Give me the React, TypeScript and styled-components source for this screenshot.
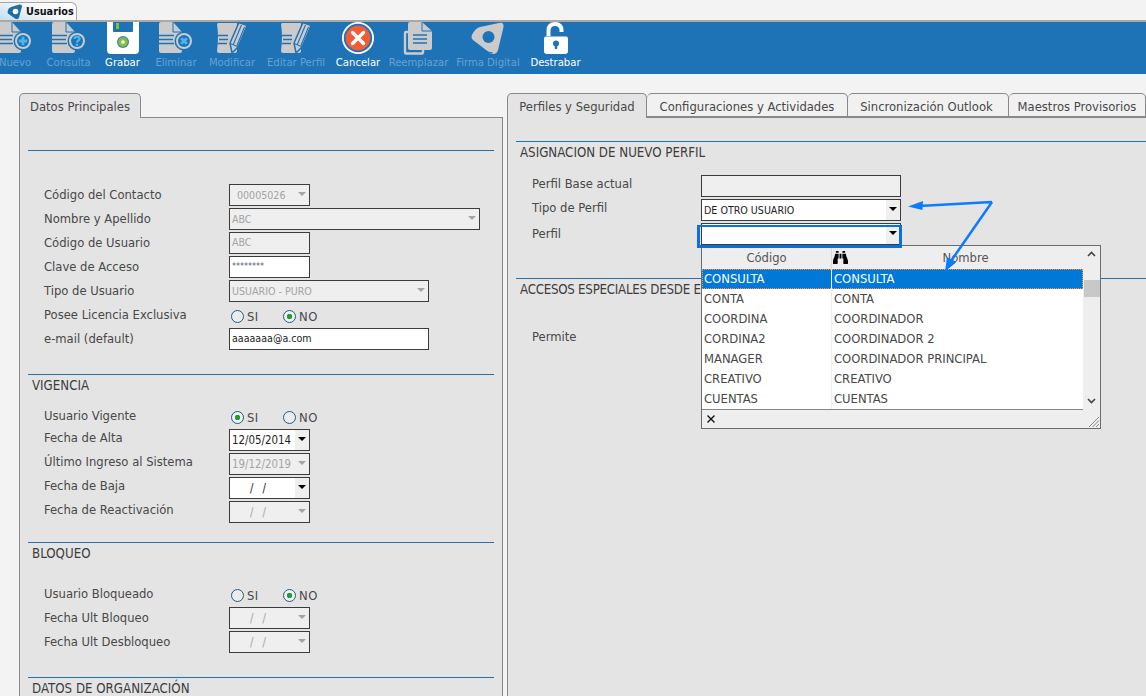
import React from "react";
import styled, { createGlobalStyle } from "styled-components";
import { FaBinoculars } from "react-icons/fa";

const Global = createGlobalStyle`
  html, body { margin: 0; padding: 0; height: 696px; overflow: hidden; background: #f3f3f3; }
  body { font-family: "DejaVu Sans Condensed", "DejaVu Sans", sans-serif; font-size: 12.9px; color: #484848; }
`;

const BLUE = "#1e73b7";
const GREY = "#cbcbcb";

const Root = styled.div`
  width: 1146px;
  height: 696px;
  overflow: hidden;
  display: flex;
  flex-direction: column;
`;
const TabStrip = styled.div`
  height: 20px;
  display: flex;
  align-items: flex-end;
  flex: none;
`;
const WindowTab = styled.div`
  width: 77px;
  height: 18px;
  box-sizing: border-box;
  border: 1px solid #a6a6a6;
  border-left: none;
  border-bottom: none;
  border-radius: 0 6px 0 0;
  background: linear-gradient(200deg, #ffffff 0%, #f4f8fb 45%, #c4ddf0 100%);
  display: flex;
  align-items: center;
  gap: 3px;
  padding-left: 7px;
  font-weight: 700;
  font-size: 10.8px;
  color: #111;
`;
const Toolbar = styled.div`
  flex: none;
  height: 54px;
  box-sizing: border-box;
  border-top: 2px solid #a9a9a9;
  background: ${BLUE};
  display: flex;
  align-items: flex-start;
`;
const ToolItem = styled.div<{ $w: number; $gap: number; $on?: boolean }>`
  width: ${(p) => p.$w}px;
  margin-left: ${(p) => p.$gap}px;
  flex: none;
  display: flex;
  flex-direction: column;
  align-items: center;
  white-space: nowrap;
  color: ${(p) => (p.$on ? "#ffffff" : "#67a1d1")};
  font-size: 11.2px;
  svg { flex: none; display: block; overflow: visible; }
`;
const ToolLabel = styled.span`
  margin-top: 2px;
  line-height: 14px;
`;
const Content = styled.div`
  flex: 1;
  min-height: 0;
  display: flex;
  gap: 4px;
  padding: 19px 0 0 19px;
`;
const Column = styled.div<{ $w?: number }>`
  ${(p) => (p.$w ? `width:${p.$w}px;flex:none;` : "flex:1;min-width:0;")}
  display: flex;
  flex-direction: column;
`;
const TabRow = styled.div`
  display: flex;
  height: 25px;
  flex: none;
  position: relative;
  z-index: 1;
`;
const PanelTab = styled.div<{ $w: number; $active?: boolean; $nudge?: number }>`
  width: ${(p) => p.$w}px;
  box-sizing: border-box;
  height: ${(p) => (p.$active ? 25 : 24)}px;
  border: 1px solid #888;
  border-bottom: ${(p) => (p.$active ? "none" : "1px solid #888")};
  border-left-width: ${(p) => (p.$active ? 1 : 0)}px;
  border-radius: 5px 5px 0 0;
  background: ${(p) => (p.$active ? "#e4e4e4" : "#f1f1f1")};
  display: flex;
  align-items: center;
  justify-content: center;
  white-space: nowrap;
  flex: none;
  padding-top: ${(p) => (p.$active ? 0 : 2)}px;
  padding-right: ${(p) => p.$nudge ?? 0}px;
`;
const Panel = styled.div<{ $open?: boolean }>`
  flex: 1;
  min-height: 0;
  margin-top: -1px;
  background: #e4e4e4;
  border: 1px solid #888;
  border-bottom: none;
  ${(p) => (p.$open ? "border-right: none;" : "")}
  padding: 0 ${(p) => (p.$open ? 0 : 8)}px 0 8px;
  position: relative;
  overflow: hidden;
`;
const Section = styled.div<{ $first: number; $after: number }>`
  margin-top: ${(p) => p.$first}px;
  margin-bottom: ${(p) => p.$after}px;
  border-top: 1px solid ${BLUE};
`;
const SectionHead = styled.div<{ $h: number; $clip?: boolean }>`
  height: ${(p) => p.$h}px;
  padding: 1px 0 0 4px;
  box-sizing: border-box;
  font-size: 13.2px;
  line-height: 20px;
  color: #3d3d3d;
  white-space: nowrap;
  ${(p) => (p.$clip ? "width: 185px; overflow: hidden; letter-spacing: -0.25px;" : "")}
`;
const Rows = styled.div<{ $label: number }>`
  display: grid;
  grid-template-columns: ${(p) => p.$label}px 1fr;
  row-gap: 2px;
  padding-left: 16px;
`;
const Label = styled.div<{ $up?: number }>`
  height: 22px;
  box-sizing: border-box;
  display: flex;
  align-items: center;
  padding-bottom: ${(p) => (p.$up ?? 1) * 2}px;
  white-space: nowrap;
`;
const Field = styled.div<{ $w: number; $off?: boolean; $indent?: number; $date?: boolean; $raise?: boolean }>`
  position: relative;
  width: ${(p) => p.$w}px;
  height: 22px;
  box-sizing: border-box;
  border: 1px solid #3c3c3c;
  background: ${(p) => (p.$off ? "#efefef" : "#ffffff")};
  color: ${(p) => (p.$off ? "#a4a4a4" : "#222")};
  display: flex;
  align-items: center;
  padding-left: ${(p) => p.$indent ?? 2}px;
  padding-bottom: ${(p) => (p.$raise ? 2 : 0)}px;
  font-size: ${(p) => (p.$date ? 11.4 : 10.6)}px;
  white-space: nowrap;
`;
const Stars = styled.span`
  font-size: 9px;
  letter-spacing: -0.05px;
  color: #56626e;
  padding-bottom: 3px;
`;
const DateGap = styled.span`
  display: inline-block;
  width: 9px;
`;
const Caret = styled.span<{ $off?: boolean }>`
  position: absolute;
  right: 0;
  top: 0;
  bottom: 0;
  width: 14px;
  background: ${(p) => (p.$off ? "transparent" : "#efefef")};
  &::after {
    content: "";
    position: absolute;
    left: 3px;
    top: 7px;
    border-left: 4px solid transparent;
    border-right: 4px solid transparent;
    border-top: 4px solid ${(p) => (p.$off ? "#a4a4a4" : "#000")};
  }
`;
const RadioGroup = styled.div`
  height: 22px;
  padding: 2px 0 0 2px;
  box-sizing: border-box;
  display: flex;
  align-items: center;
`;
const RadioDot = styled.span<{ $on?: boolean }>`
  width: 13px;
  height: 13px;
  box-sizing: border-box;
  border: 1px solid #1f5c8c;
  border-radius: 50%;
  background: ${(p) => (p.$on ? "radial-gradient(circle, #1f9e2f 0 2.5px, #f2f2f2 3px)" : "#ececec")};
  flex: none;
`;
const RadioText = styled.span<{ $w: number }>`
  width: ${(p) => p.$w}px;
  padding-left: 3px;
  box-sizing: border-box;
  letter-spacing: 0.5px;
`;
const FieldWrap = styled.div`
  position: relative;
`;
const Highlight = styled.div`
  position: absolute;
  left: -4px;
  top: 2px;
  width: 205px;
  height: 23px;
  box-sizing: border-box;
  border: 3px solid #0a6fe0;
  border-top-width: 2.5px;
  z-index: 3;
  pointer-events: none;
`;
const Popup = styled.div`
  position: absolute;
  left: 0;
  top: 22px;
  width: 400px;
  height: 184px;
  box-sizing: border-box;
  border: 1px solid #6c6c6c;
  background: #fff;
  z-index: 2;
  display: grid;
  grid-template-columns: 1fr 17px;
  grid-template-rows: 1fr 19px;
`;
const ListArea = styled.div`
  display: flex;
  flex-direction: column;
  min-width: 0;
`;
const HeadRow = styled.div`
  height: 23px;
  flex: none;
  display: grid;
  grid-template-columns: 129px 1fr;
  background: #eeeeee;
  color: #555;
`;
const HeadCell = styled.div`
  display: flex;
  align-items: center;
  justify-content: center;
  & + & { border-left: 1px solid #d8d8d8; justify-content: flex-start; padding-left: 1px; }
  svg { flex: none; color: #000; }
`;
const HeadName = styled.span`
  flex: 1;
  text-align: center;
`;
const ListRow = styled.div<{ $sel?: boolean }>`
  height: 20px;
  box-sizing: border-box;
  flex: none;
  display: grid;
  grid-template-columns: 129px 1fr;
  line-height: 20px;
  background: ${(p) => (p.$sel ? "#0078d7" : "#fff")};
  color: ${(p) => (p.$sel ? "#fff" : "#484848")};
  ${(p) => (p.$sel ? "outline: 1px dotted #ff9a2e; outline-offset: -1px;" : "")}
`;
const ListCell = styled.div<{ $sel?: boolean }>`
  height: 100%;
  padding-left: 2px;
  white-space: nowrap;
  & + & { border-left: 1px solid ${(p) => (p.$sel ? "#fff" : "#eee")}; padding-left: 2px; }
`;
const Scroll = styled.div`
  grid-row: 1 / 3;
  grid-column: 2;
  background: #eeeeee;
  position: relative;
`;
const ScrollThumb = styled.div`
  position: absolute;
  left: 1px;
  right: 0;
  top: 34px;
  height: 17px;
  background: #c8c8c8;
`;
const Chevron = styled.svg<{ $top: number }>`
  position: absolute;
  left: 4px;
  top: ${(p) => p.$top}px;
`;
const PopupFoot = styled.div`
  background: #eeeeee;
  border-top: 1px solid #888;
  position: relative;
  display: flex;
  align-items: center;
  padding-left: 4px;
`;
const Grip = styled.svg`
  position: absolute;
  right: 0;
  bottom: 0;
  z-index: 4;
`;
const Arrows = styled.svg`
  position: absolute;
  left: 0;
  top: 0;
  z-index: 5;
  pointer-events: none;
`;

const DocBody = () => (
  <path d="M1 0H13L22 10V29Q22 31 20 31H1Q-1 31-1 29V2Q-1 0 1 0Z" fill={GREY} />
);
const DocLines = () => (
  <path d="M-1 13.5H14M-1 17.5H13M-1 21.5H14" stroke={BLUE} strokeWidth="1.5" />
);
const GLYPH = "#4db5ee";
const Badge = ({ children }: { children: React.ReactNode }) => (
  <>
    <path d="M13 0V10H22" fill="none" stroke={BLUE} strokeWidth="1" />
    <circle cx="24" cy="19" r="9.5" fill={BLUE} />
    <circle cx="24" cy="19" r="8" fill={GREY} />
    <circle cx="24" cy="19" r="6" fill="#1a75b8" />
    {children}
  </>
);
const DocIcon = ({ kind }: { kind: "plus" | "q" | "x" }) => (
  <svg width="32" height="32" viewBox="0 0 32 32">
    <DocBody />
    <DocLines />
    <Badge>
      {kind === "plus" && <path d="M24 14.8V23.2M19.8 19H28.2" stroke={GLYPH} strokeWidth="2.8" />}
      {kind === "x" && <path d="M21.2 16.2L26.8 21.8M26.8 16.2L21.2 21.800" stroke={GLYPH} strokeWidth="2.8" />}
      {kind === "q" && (
        <>
          <path d="M21.5 17Q21.6 14.8 24 14.8Q26.500 14.800 26.500 16.800Q26.500 18 25 18.800Q24 19.400 24 20.600" fill="none" stroke={GLYPH} strokeWidth="2.200" />
          <circle cx="24" cy="22.8" r="1.3" fill={GLYPH} />
        </>
      )}
    </Badge>
  </svg>
);
const PencilIcon = () => (
  <svg width="32" height="32" viewBox="0 0 32 32">
    <path d="M3 1H21V29Q21 31 19 31H3Q1 31 1 29Q3 15 1 2Q1 1 3 1Z" fill={GREY} />
    <path d="M2 13.5H12M3 17.5H12M2 21.5H11" stroke={BLUE} strokeWidth="1.5" />
    <path d="M16 31L14 21L23 0.5L31 3.5L22 25Z" fill={GREY} stroke={BLUE} strokeWidth="1.5" />
    <path d="M17.5 22L25.5 3M21 23.5L28.5 5M14.5 21.5L22.5 25" fill="none" stroke={BLUE} strokeWidth="1.1" />
  </svg>
);
const SaveIcon = () => (
  <svg width="32" height="32" viewBox="0 0 32 32">
    <path d="M0 0H32V28Q32 32 28 32H4Q0 32 0 28Z" fill="#fff" />
    <path d="M6 0H26V9Q26 10 25 10H7Q6 10 6 9Z" fill={BLUE} />
    <rect x="9" y="1" width="3" height="6" fill="#86bf3c" />
    <circle cx="16" cy="20" r="6" fill="#2f86b8" />
    <circle cx="16" cy="20" r="4.8" fill="#86bf3c" />
    <circle cx="16" cy="20" r="1.8" fill="#fff" />
  </svg>
);
const CancelIcon = () => (
  <svg width="32" height="32" viewBox="0 0 32 32">
    <circle cx="16" cy="16" r="16" fill="#fff" />
    <circle cx="16" cy="16" r="14.2" fill={BLUE} />
    <circle cx="16" cy="16" r="12.4" fill="#f15d36" />
    <path d="M10.5 10.5L21.5 21.5M21.5 10.5L10.5 21.5" stroke="#fff" strokeWidth="3.4" strokeLinecap="round" />
  </svg>
);
const ReplaceIcon = () => (
  <svg width="32" height="32" viewBox="0 0 32 32">
    <path d="M5 10H3Q2 10 2 11V30Q2 31.500 3 31.500H19Q20 31.500 20 30V28" fill="none" stroke={GREY} strokeWidth="2.4" />
    <path d="M7 0H19L29 9V26Q29 28 27 28H7Q5 28 5 26V2Q5 0 7 0Z" fill={GREY} />
    <path d="M19 0V9H29" fill="none" stroke={BLUE} strokeWidth="1" />
    <path d="M10 13H24M10 17H24M10 21H24" stroke={BLUE} strokeWidth="1.6" />
  </svg>
);
const SignIcon = () => (
  <svg width="34" height="32" viewBox="0 0 34 32">
    <path d="M2 11Q-1 15 2 18L19 31Q25 34 27 28L32.500 5Q33 0 28 1L9 5Q5 6 2 11Z" fill={GREY} />
    <path d="M6 22Q12 30 22 31" fill="none" stroke={BLUE} strokeWidth="0.9" />
    <circle cx="17.5" cy="15" r="6" fill={BLUE} />
  </svg>
);
const LockIcon = () => (
  <svg width="32" height="32" viewBox="0 0 32 32">
    <path d="M8.5 14V8.500Q8.500 2 15 2Q21.500 2 21.500 8.500V10" fill="none" stroke="#fff" strokeWidth="4" />
    <path d="M6 14.500H26Q28 14.500 28 16.500V29Q28 32 25 32H7Q4 32 4 29V16.500Q4 14.500 6 14.500Z" fill="#fff" />
    <circle cx="16" cy="21.500" r="3" fill={BLUE} />
    <rect x="14.800" y="22" width="2.400" height="5" fill={BLUE} />
  </svg>
);
const LogoIcon = () => (
  <svg width="16" height="16" viewBox="0 0 16 16" style={{ flex: "none" }}>
    <path d="M1 6Q0 8 1 9.500L8 14.500Q11 16 12 13.500L15 2.500Q15 0 12.500 0.500L4 3Q2 4 1 6Z" fill="#1d6f9f" />
    <circle cx="8.500" cy="7.500" r="2.800" fill="#fff" />
  </svg>
);

const tools = [
  { label: "Nuevo", w: 30, gap: 0, icon: <DocIcon kind="plus" /> },
  { label: "Consulta", w: 43, gap: 17, icon: <DocIcon kind="q" /> },
  { label: "Grabar", w: 35, gap: 15, on: true, icon: <SaveIcon /> },
  { label: "Eliminar", w: 38, gap: 17, icon: <DocIcon kind="x" /> },
  { label: "Modificar", w: 46, gap: 14, icon: <PencilIcon /> },
  { label: "Editar Perfil", w: 60, gap: 11, icon: <PencilIcon /> },
  { label: "Cancelar", w: 44, gap: 10, on: true, icon: <CancelIcon /> },
  { label: "Reemplazar", w: 57, gap: 10, icon: <ReplaceIcon /> },
  { label: "Firma Digital", w: 64, gap: 9, icon: <SignIcon /> },
  { label: "Destrabar", w: 51, gap: 10, on: true, icon: <LockIcon /> },
];

const Radio = ({ value }: { value: "SI" | "NO" }) => (
  <RadioGroup>
    <RadioDot $on={value === "SI"} />
    <RadioText $w={39}>SI</RadioText>
    <RadioDot $on={value === "NO"} />
    <RadioText $w={30}>NO</RadioText>
  </RadioGroup>
);

const EmptyDate = () => (
  <>
    /<DateGap />/
  </>
);

const list: [string, string][] = [
  ["CONSULTA", "CONSULTA"],
  ["CONTA", "CONTA"],
  ["COORDINA", "COORDINADOR"],
  ["CORDINA2", "COORDINADOR 2"],
  ["MANAGER", "COORDINADOR PRINCIPAL"],
  ["CREATIVO", "CREATIVO"],
  ["CUENTAS", "CUENTAS"],
];

export default function App() {
  return (
    <Root>
      <Global />
      <TabStrip>
        <WindowTab>
          <LogoIcon />
          Usuarios
        </WindowTab>
      </TabStrip>
      <Toolbar>
        {tools.map((t) => (
          <ToolItem key={t.label} $w={t.w} $gap={t.gap} $on={t.on}>
            {t.icon}
            <ToolLabel>{t.label}</ToolLabel>
          </ToolItem>
        ))}
      </Toolbar>
      <Content>
        <Column $w={484}>
          <TabRow>
            <PanelTab $w={122} $active>Datos Principales</PanelTab>
          </TabRow>
          <Panel>
            <Section $first={32} $after={24}>
              <SectionHead $h={33} />
              <Rows $label={185}>
                <Label $up={1}>Código del Contacto</Label>
                <Field $w={81} $off $indent={7}>00005026<Caret $off /></Field>
                <Label $up={1}>Nombre y Apellido</Label>
                <Field $w={251} $off>ABC<Caret $off /></Field>
                <Label $up={1}>Código de Usuario</Label>
                <Field $w={81} $off $raise>ABC</Field>
                <Label $up={1}>Clave de Acceso</Label>
                <Field $w={81}><Stars>********</Stars></Field>
                <Label $up={1}>Tipo de Usuario</Label>
                <Field $w={200} $off>USUARIO - PURO<Caret $off /></Field>
                <Label $up={1}>Posee Licencia Exclusiva</Label>
                <Radio value="NO" />
                <Label $up={1}>e-mail (default)</Label>
                <Field $w={200} $raise>aaaaaaa@a.com</Field>
              </Rows>
            </Section>
            <Section $first={0} $after={19}>
              <SectionHead $h={30}>VIGENCIA</SectionHead>
              <Rows $label={185}>
                <Label $up={1}>Usuario Vigente</Label>
                <Radio value="SI" />
                <Label $up={3}>Fecha de Alta</Label>
                <Field $w={81} $date>12/05/2014<Caret /></Field>
                <Label $up={3}>Último Ingreso al Sistema</Label>
                <Field $w={81} $off $date>19/12/2019<Caret $off /></Field>
                <Label $up={3}>Fecha de Baja</Label>
                <Field $w={81} $date $indent={20}><EmptyDate /><Caret /></Field>
                <Label $up={3}>Fecha de Reactivación</Label>
                <Field $w={81} $off $date $indent={20}><EmptyDate /><Caret $off /></Field>
              </Rows>
            </Section>
            <Section $first={0} $after={24}>
              <SectionHead $h={40}>BLOQUEO</SectionHead>
              <Rows $label={185}>
                <Label $up={1}>Usuario Bloqueado</Label>
                <Radio value="NO" />
                <Label $up={1}>Fecha Ult Bloqueo</Label>
                <Field $w={81} $off $date $indent={20}><EmptyDate /><Caret $off /></Field>
                <Label $up={1}>Fecha Ult Desbloqueo</Label>
                <Field $w={81} $off $date $indent={20}><EmptyDate /><Caret $off /></Field>
              </Rows>
            </Section>
            <Section $first={0} $after={0}>
              <SectionHead $h={30}>DATOS DE ORGANIZACIÓN</SectionHead>
            </Section>
          </Panel>
        </Column>
        <Column>
          <TabRow>
            <PanelTab $w={140} $active>Perfiles y Seguridad</PanelTab>
            <PanelTab $w={201}>Configuraciones y Actividades</PanelTab>
            <PanelTab $w={161} $nudge={3}>Sincronización Outlook</PanelTab>
            <PanelTab $w={137}>Maestros Provisorios</PanelTab>
          </TabRow>
          <Panel $open>
            <Section $first={23} $after={33}>
              <SectionHead $h={33}>ASIGNACION DE NUEVO PERFIL</SectionHead>
              <Rows $label={169}>
                <Label $up={3}>Perfil Base actual</Label>
                <Field $w={200} $off />
                <Label $up={3}>Tipo de Perfil</Label>
                <Field $w={200}>DE OTRO USUARIO<Caret /></Field>
                <Label $up={1}>Perfil</Label>
                <FieldWrap>
                  <Field $w={200}><Caret /></Field>
                  <Highlight />
                  <Popup>
                    <ListArea>
                      <HeadRow>
                        <HeadCell>Código</HeadCell>
                        <HeadCell>
                          <FaBinoculars size={15} />
                          <HeadName>Nombre</HeadName>
                        </HeadCell>
                      </HeadRow>
                      {list.map(([a, b], i) => (
                        <ListRow key={a} $sel={i === 0}>
                          <ListCell $sel={i === 0}>{a}</ListCell>
                          <ListCell $sel={i === 0}>{b}</ListCell>
                        </ListRow>
                      ))}
                    </ListArea>
                    <Scroll>
                      <Chevron $top={5} width="9" height="6" viewBox="0 0 9 6">
                        <path d="M1 5L4.500 1.500L8 5" fill="none" stroke="#444" strokeWidth="1.6" />
                      </Chevron>
                      <ScrollThumb />
                      <Chevron $top={152} width="9" height="6" viewBox="0 0 9 6">
                        <path d="M1 1L4.500 4.500L8 1" fill="none" stroke="#444" strokeWidth="1.6" />
                      </Chevron>
                    </Scroll>
                    <PopupFoot>
                      <svg width="10" height="10" viewBox="0 0 10 10">
                        <path d="M1.500 1.500L8.500 8.500M8.500 1.500L1.500 8.500" stroke="#111" strokeWidth="1.400" />
                      </svg>
                    </PopupFoot>
                    <Grip width="14" height="14" viewBox="0 0 14 14">
                      <path d="M13 3L3 13M13 6.500L6.500 13M13 10L10 13" stroke="#8a8a8a" strokeWidth="1" />
                    </Grip>
                  </Popup>
                </FieldWrap>
              </Rows>
            </Section>
            <Section $first={0} $after={0}>
              <SectionHead $h={46} $clip>ACCESOS ESPECIALES DESDE E</SectionHead>
              <Rows $label={169}>
                <Label $up={0}>Permite</Label>
              </Rows>
            </Section>
            <Arrows width="639" height="300" viewBox="507 117 639 300">
              <path d="M991 201L918 205M991 201L950 260" fill="none" stroke="#0a7cff" strokeWidth="2.500" />
              <path d="M907 205.500L922 200L921.500 209Z M944 270.500L946 256L955 261.500Z" fill="#0a7cff" />
            </Arrows>
          </Panel>
        </Column>
      </Content>
    </Root>
  );
}
